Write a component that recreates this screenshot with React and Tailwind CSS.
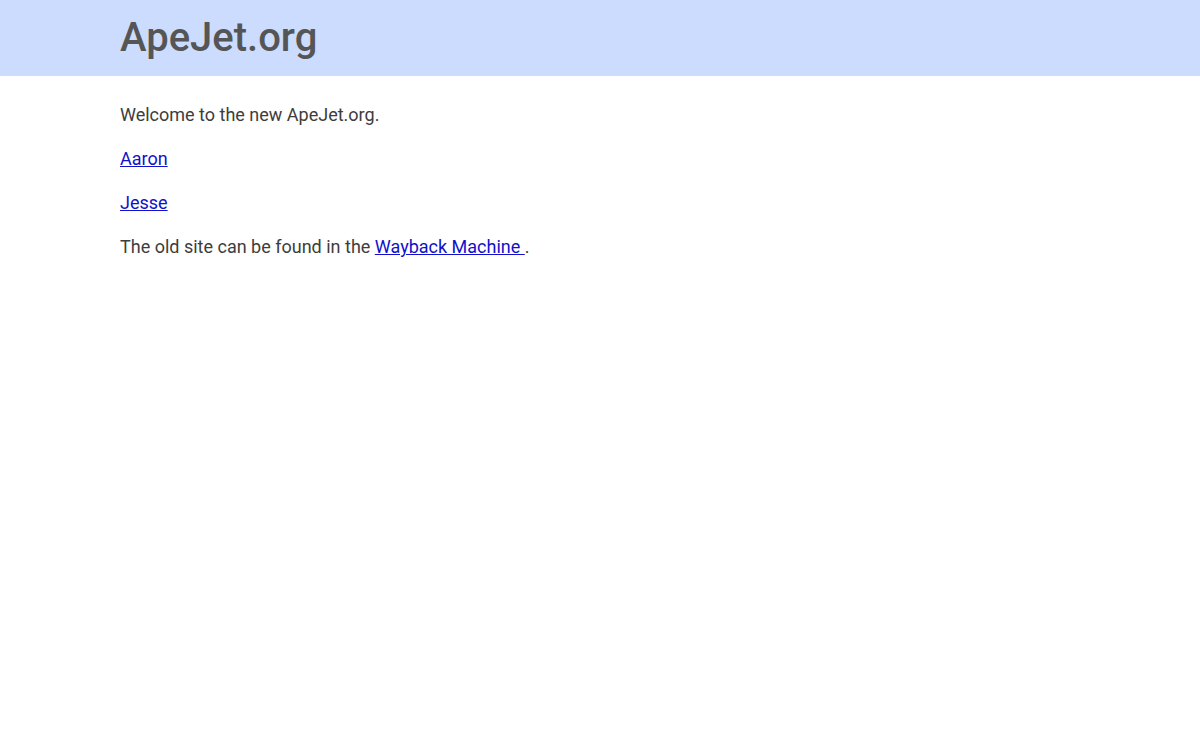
export default function App() {
  return (
    <div className="min-h-[740px] bg-white" style={{ fontFamily: "Roboto, 'Noto Sans', sans-serif" }}>
      <header className="h-[76px] bg-[#ccdcff] px-[120px] flex items-center">
        <h1 className="text-[40px] font-medium text-[#555555] leading-none">ApeJet.org</h1>
      </header>
      <main className="px-[120px] pt-[26px] text-[18px] leading-[26px] text-[#3d3d3d]">
        <p className="mb-[18px]">Welcome to the new ApeJet.org.</p>
        <p className="mb-[18px]"><a href="#" className="text-[#1111cc] underline">Aaron</a></p>
        <p className="mb-[18px]"><a href="#" className="text-[#1111cc] underline">Jesse</a></p>
        <p>The old site can be found in the <a href="#" className="text-[#1111cc] underline">Wayback Machine </a>.</p>
      </main>
    </div>
  );
}
